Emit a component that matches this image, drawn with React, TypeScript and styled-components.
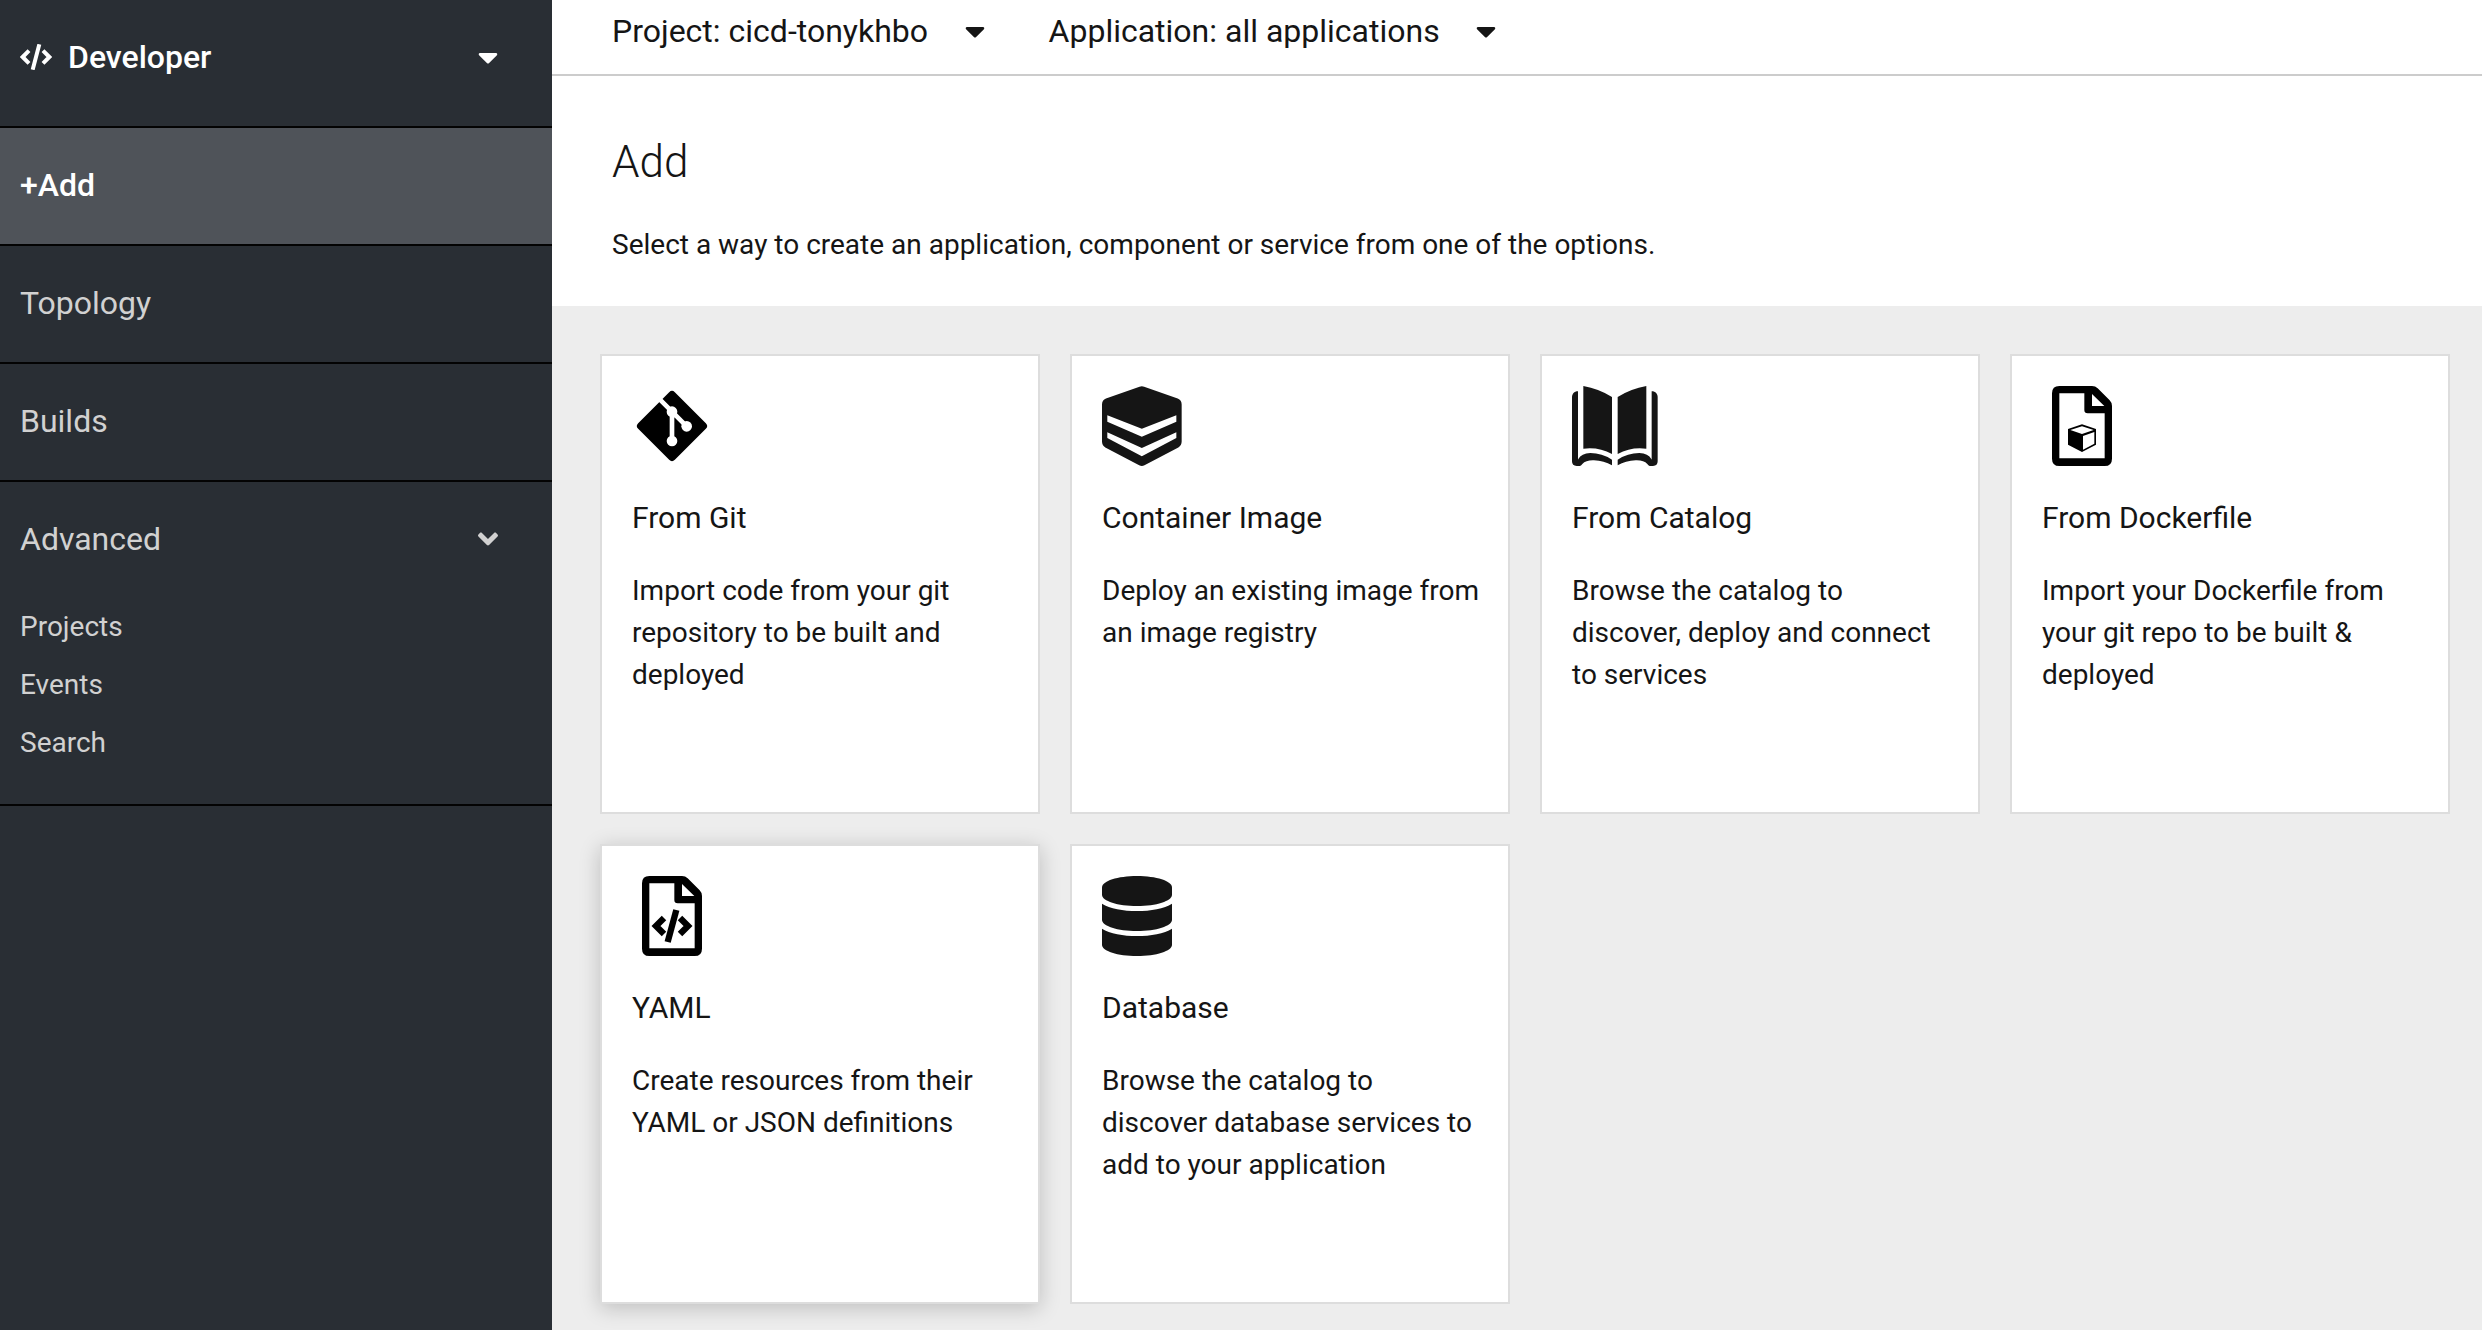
import React from "react";
import styled, { createGlobalStyle, css } from "styled-components";
import { FaAngleDown, FaCaretDown } from "react-icons/fa";

const GlobalStyle = createGlobalStyle`
  *, *::before, *::after { box-sizing: border-box; }
  body {
    margin: 0;
    background: #ededed;
    color: #151515;
    font-family: Roboto, "Open Sans", sans-serif;
    font-size: 28px;
    line-height: 42px;
  }
  h1, h2, p, ul { margin: 0; padding: 0; }
  a { color: inherit; text-decoration: none; }
  button, select { font: inherit; color: inherit; }
`;

const Page = styled.div`
  display: flex;
  min-height: 100vh;
`;

const Sidebar = styled.nav`
  flex: 0 0 552px;
  background: #292e34;
  color: #d1d1d1;
`;

const plainSelect = css`
  appearance: none;
  margin: 0;
  padding: 0;
  border: 0;
  background: transparent;
  cursor: pointer;
`;

const Perspective = styled.label`
  display: flex;
  align-items: center;
  gap: 16px;
  height: 128px;
  padding: 0 54px 12px 20px;
  border-bottom: 2px solid #030303;
  color: #fff;
  font-size: 32px;
  font-weight: 500;
`;

const PerspectiveSelect = styled.select`
  ${plainSelect}
  flex: 1;
`;

const navRow = css`
  display: flex;
  align-items: center;
  justify-content: space-between;
  width: 100%;
  height: 116px;
  padding: 0 54px 2px 20px;
  font-size: 32px;
`;

const NavLink = styled.a<{ $active?: boolean }>`
  ${navRow}
  height: 118px;
  border-bottom: 2px solid #030303;
  ${(p) => p.$active && css`
    background: #4f5359;
    color: #fff;
    font-weight: 500;
  `}
`;

const NavToggle = styled.button`
  ${navRow}
  border: 0;
  background: transparent;
  cursor: pointer;
`;

const NavGroup = styled.div`
  padding-bottom: 32px;
  border-bottom: 2px solid #030303;
`;

const SubList = styled.ul`
  list-style: none;
`;

const SubLink = styled.a`
  display: block;
  padding: 8px 20px;
`;

const Main = styled.main`
  flex: 1;
  min-width: 0;
`;

const TopBar = styled.div`
  display: flex;
  gap: 64px;
  height: 76px;
  padding: 10px 60px 0;
  border-bottom: 2px solid #ccc;
  background: #fff;
  font-size: 32px;
`;

const Picker = styled.label`
  display: flex;
  align-items: center;
  gap: 8px;
  height: 42px;
`;

const PickerSelect = styled.select`
  ${plainSelect}
  margin-right: 28px;
`;

const Caret = styled(FaCaretDown)`
  width: 20px;
  height: 32px;
  pointer-events: none;
`;

const Angle = styled(FaAngleDown)`
  width: 20px;
  height: 32px;
`;

const PageHeader = styled.header`
  padding: 56px 60px 40px;
  background: #fff;
`;

const PageTitle = styled.h1`
  margin-bottom: 32px;
  font-size: 44px;
  font-weight: 300;
  line-height: 60px;
`;

const Gallery = styled.section`
  display: grid;
  grid-template-columns: repeat(auto-fill, 440px);
  gap: 30px;
  padding: 48px 32px 26px 48px;
`;

const Card = styled.a<{ $raised?: boolean }>`
  height: 460px;
  padding: 30px 26px 30px 30px;
  border: 2px solid #ddd;
  background: #fff;
  ${(p) => p.$raised && css`
    box-shadow: 0 4px 20px rgba(3, 3, 3, 0.2);
  `}
`;

const IconSlot = styled.div`
  height: 80px;
  svg { display: block; height: 80px; width: auto; }
`;

const CardTitle = styled.h2`
  margin: 31px 0;
  font-size: 30px;
  font-weight: 400;
  line-height: 42px;
`;

const CodeIcon = () => (
  <svg width="32" height="26" viewBox="0 0 96 78" fill="none" stroke="currentColor" strokeWidth="12" aria-hidden="true">
    <path d="M27 20 8 39 27 58M69 20 88 39 69 58M58 1 38 77" />
  </svg>
);

const GitIcon = () => (
  <svg viewBox="0 0 240 240" aria-hidden="true">
    <path d="M120 27 213 120 120 213 27 120Z" fill="#000" stroke="#000" strokeWidth="24" strokeLinejoin="round" />
    <g stroke="#fff" strokeWidth="14" fill="#fff">
      <path d="M78 35 120 77 164 121M120 77V165" fill="none" />
      <circle cx="120" cy="77" r="16" stroke="none" />
      <circle cx="164" cy="121" r="16" stroke="none" />
      <circle cx="120" cy="165" r="16" stroke="none" />
    </g>
  </svg>
);

const ImageIcon = () => (
  <svg viewBox="0 0 240 241" aria-hidden="true">
    <path
      fill="#151515"
      fillRule="evenodd"
      d="M113 2Q120-1 127 2L228 38Q240 43 240 56V167Q240 179 230 185L128 239Q120 243 112 239L10 185Q0 179 0 167V56Q0 43 12 38ZM16 88V108L120 153 224 108V88L120 129ZM16 139V157L120 212 224 157V139L120 187Z"
    />
  </svg>
);

const coverHalf =
  "M18 16C6 16 0 24 0 34V226Q0 240 14 240H24Q28 239 31 234Q42 222 66 223Q96 224 120 238V221Q90 201 55 201Q28 203 19 219L18 221Z";
const pageHalf = "M34 0Q80 8 120 33V204Q80 182 34 188Z";

const BookIcon = () => (
  <svg viewBox="0 0 257 240" fill="#151515" aria-hidden="true">
    <path d={coverHalf} />
    <path d={pageHalf} />
    <g transform="matrix(-1 0 0 1 257 0)">
      <path d={coverHalf} />
      <path d={pageHalf} />
    </g>
  </svg>
);

const DatabaseIcon = () => (
  <svg viewBox="0 0 210 240" fill="#151515" aria-hidden="true">
    <path d="M210 34V56C210 75 163 90 105 90S0 75 0 56V34C0 15 47 0 105 0S210 15 210 34Z" />
    <path d="M210 83V131C210 150 163 165 105 165S0 150 0 131V83C23 98 64 105 105 105S187 98 210 83Z" />
    <path d="M210 158V206C210 225 163 240 105 240S0 225 0 206V158C23 173 64 180 105 180S187 173 210 158Z" />
  </svg>
);

const FileIcon = ({ children }: { children: React.ReactNode }) => (
  <svg viewBox="-30 0 240 240" aria-hidden="true">
    <path
      fillRule="evenodd"
      d="M22 0H120Q130 0 137 7L173 43Q180 50 180 60V218Q180 240 158 240H22Q0 240 0 218V22Q0 0 22 0ZM22 22V217H158V82H107Q97 82 97 72V22ZM120 24V60H157Z"
    />
    {children}
  </svg>
);

const DockerfileIcon = () => (
  <FileIcon>
    <path
      fillRule="evenodd"
      d="M90 115 132 129V176L90 198 48 176V129ZM90 121 55 132 90 144 125 132ZM93 150V191L127 173V138Z"
    />
  </FileIcon>
);

const YamlIcon = () => (
  <FileIcon>
    <g fill="none" stroke="#000" strokeWidth="19">
      <path d="M66 126 42 150 66 174" />
      <path d="M114 126 138 150 114 174" />
      <path d="M103 102 77 198" />
    </g>
  </FileIcon>
);

const cards = [
  { title: "From Git", text: "Import code from your git repository to be built and deployed", icon: <GitIcon /> },
  { title: "Container Image", text: "Deploy an existing image from an image registry", icon: <ImageIcon /> },
  { title: "From Catalog", text: "Browse the catalog to discover, deploy and connect to services", icon: <BookIcon /> },
  { title: "From Dockerfile", text: "Import your Dockerfile from your git repo to be built & deployed", icon: <DockerfileIcon /> },
  { title: "YAML", text: "Create resources from their YAML or JSON definitions", icon: <YamlIcon />, raised: true },
  { title: "Database", text: "Browse the catalog to discover database services to add to your application", icon: <DatabaseIcon /> },
];

export default function App() {
  return (
    <Page>
      <GlobalStyle />
      <Sidebar aria-label="Main">
        <Perspective>
          <CodeIcon />
          <PerspectiveSelect aria-label="Perspective">
            <option>Developer</option>
          </PerspectiveSelect>
          <Caret aria-hidden="true" />
        </Perspective>
        <NavLink href="#add" $active aria-current="page">+Add</NavLink>
        <NavLink href="#topology">Topology</NavLink>
        <NavLink href="#builds">Builds</NavLink>
        <NavGroup>
          <NavToggle type="button" aria-expanded="true">
            Advanced
            <Angle aria-hidden="true" />
          </NavToggle>
          <SubList>
            {["Projects", "Events", "Search"].map((name) => (
              <li key={name}>
                <SubLink href={`#${name.toLowerCase()}`}>{name}</SubLink>
              </li>
            ))}
          </SubList>
        </NavGroup>
      </Sidebar>
      <Main>
        <TopBar>
          <Picker>
            Project:
            <PickerSelect>
              <option>cicd-tonykhbo</option>
            </PickerSelect>
            <Caret aria-hidden="true" />
          </Picker>
          <Picker>
            Application:
            <PickerSelect>
              <option>all applications</option>
            </PickerSelect>
            <Caret aria-hidden="true" />
          </Picker>
        </TopBar>
        <PageHeader>
          <PageTitle>Add</PageTitle>
          <p>Select a way to create an application, component or service from one of the options.</p>
        </PageHeader>
        <Gallery>
          {cards.map((card) => (
            <Card key={card.title} href="#create" $raised={card.raised}>
              <IconSlot>{card.icon}</IconSlot>
              <CardTitle>{card.title}</CardTitle>
              <p>{card.text}</p>
            </Card>
          ))}
        </Gallery>
      </Main>
    </Page>
  );
}
